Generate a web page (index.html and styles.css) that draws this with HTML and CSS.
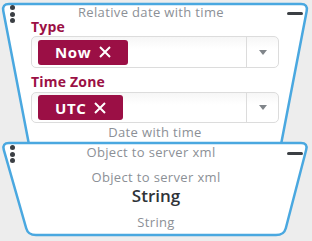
FILE: index.html
```html
<!DOCTYPE html>
<html>
<head>
<meta charset="utf-8">
<link rel="stylesheet" href="styles.css">
</head>
<body>
<div class="canvas">
  <div class="node node-a">
    <svg class="shape" width="312" height="160" viewBox="0 0 312 160">
      <path d="M 9,4 L 301,4 Q 308,4 306.7,10.9 L 281.3,143.1 Q 280,150 273,150 L 37,150 Q 30,150 28.7,143.1 L 3.3,10.9 Q 2,4 9,4 Z"/>
    </svg>
    <div class="head">
      <span class="dots"><i></i><i></i><i></i></span>
      <span class="title">Relative date with time</span>
      <span class="minus"></span>
    </div>
    <div class="body">
      <div class="label">Type</div>
      <div class="select">
        <div class="values">
          <span class="chip">Now <svg class="x" width="12" height="12" viewBox="0 0 12 12"><path d="M1 1 L11 11 M11 1 L1 11"/></svg></span>
        </div>
        <div class="arrow"><span class="caret"></span></div>
      </div>
      <div class="label label-2">Time Zone</div>
      <div class="select">
        <div class="values">
          <span class="chip">UTC <svg class="x" width="12" height="12" viewBox="0 0 12 12"><path d="M1 1 L11 11 M11 1 L1 11"/></svg></span>
        </div>
        <div class="arrow"><span class="caret"></span></div>
      </div>
      <div class="foot">Date with time</div>
    </div>
  </div>
  <div class="node node-b">
    <svg class="shape" width="312" height="98" viewBox="0 0 312 98">
      <path d="M 9,2 L 301,2 Q 308,2 306.2,8.8 L 285.8,87.2 Q 284,94 276,94 L 36,94 Q 28,94 26.2,87.2 L 3.8,8.8 Q 2,2 9,2 Z"/>
    </svg>
    <div class="head">
      <span class="dots"><i></i><i></i><i></i></span>
      <span class="title">Object to server xml</span>
      <span class="minus"></span>
    </div>
    <div class="content">
      <div class="sub">Object to server xml</div>
      <div class="value">String</div>
      <div class="foot foot-b">String</div>
    </div>
  </div>
</div>
</body>
</html>
```
FILE: styles.css
```css
html, body {
  margin: 0;
  padding: 0;
  background: #ededed;
}
body {
  font-family: "Open Sans", "DejaVu Sans", sans-serif;
  width: 312px;
  height: 241px;
  overflow: hidden;
}
.canvas {
  position: relative;
  width: 312px;
  height: 241px;
}
.node {
  position: absolute;
  left: 0;
  width: 312px;
}
.node-a { top: 0; height: 160px; }
.node-b { top: 141px; height: 100px; }
.shape {
  position: absolute;
  left: 0;
  top: 0;
  z-index: 0;
}
.shape path {
  fill: #ffffff;
  stroke: #4aa8e0;
  stroke-width: 2.5;
}
.head, .body, .content {
  position: relative;
  z-index: 1;
}
.head {
  display: flex;
  align-items: flex-start;
  padding: 5px 9px 0 10px;
  height: 14px;
}
.node-b .head { padding-top: 4px; height: 15px; }
.dots {
  display: flex;
  flex-direction: column;
  gap: 1.5px;
  width: 5px;
}
.dots i {
  display: block;
  width: 5px;
  height: 5px;
  border-radius: 50%;
  background: #3b3f44;
}
.title {
  flex: 1;
  text-align: center;
  font-size: 13px;
  line-height: 14px;
  letter-spacing: 0.35px;
  color: #8c9096;
}
.minus {
  width: 16px;
  height: 3px;
  border-radius: 2px;
  background: #3b3f44;
  margin-top: 7px;
}
.body {
  padding: 0 33px 0 31px;
}
.label {
  font-size: 14px;
  font-weight: 700;
  color: #9b1045;
  line-height: 16px;
  letter-spacing: 0.2px;
}
.label-2 { margin-top: 6px; }
.select {
  box-sizing: border-box;
  display: flex;
  height: 32px;
  border: 1px solid #dcdcdc;
  border-radius: 5px;
  background: linear-gradient(#f6f6f6, #ffffff 40%);
  margin-top: 1px;
}
.label-2 + .select { margin-top: 2px; height: 31px; }
.values {
  flex: 1;
  padding: 0 6px;
  display: flex;
  align-items: center;
}
.chip {
  display: flex;
  align-items: center;
  gap: 8px;
  height: 25px;
  padding: 0 17px 0 17px;
  border-radius: 3px;
  background: #9b0f45;
  color: #ffffff;
  font-size: 15px;
  font-weight: 700;
  letter-spacing: 0.6px;
}
.x path {
  stroke: #ffffff;
  stroke-width: 2;
  fill: none;
}
.arrow {
  width: 31px;
  border-left: 1px solid #dcdcdc;
  display: flex;
  align-items: center;
  justify-content: center;
}
.caret {
  width: 0;
  height: 0;
  border-left: 4.5px solid transparent;
  border-right: 4.5px solid transparent;
  border-top: 5px solid #80858a;
}
.foot {
  text-align: center;
  font-size: 13px;
  line-height: 16px;
  letter-spacing: 0.35px;
  color: #8c9096;
  margin-top: 1px;
}
.content {
  padding-top: 10px;
  text-align: center;
}
.sub {
  font-size: 13px;
  line-height: 15px;
  letter-spacing: 0.35px;
  color: #8c9096;
}
.value {
  font-size: 17px;
  font-weight: 600;
  line-height: 20px;
  margin-top: 1px;
  color: #2f3338;
}
.foot-b {
  margin-top: 8px;
}
```
